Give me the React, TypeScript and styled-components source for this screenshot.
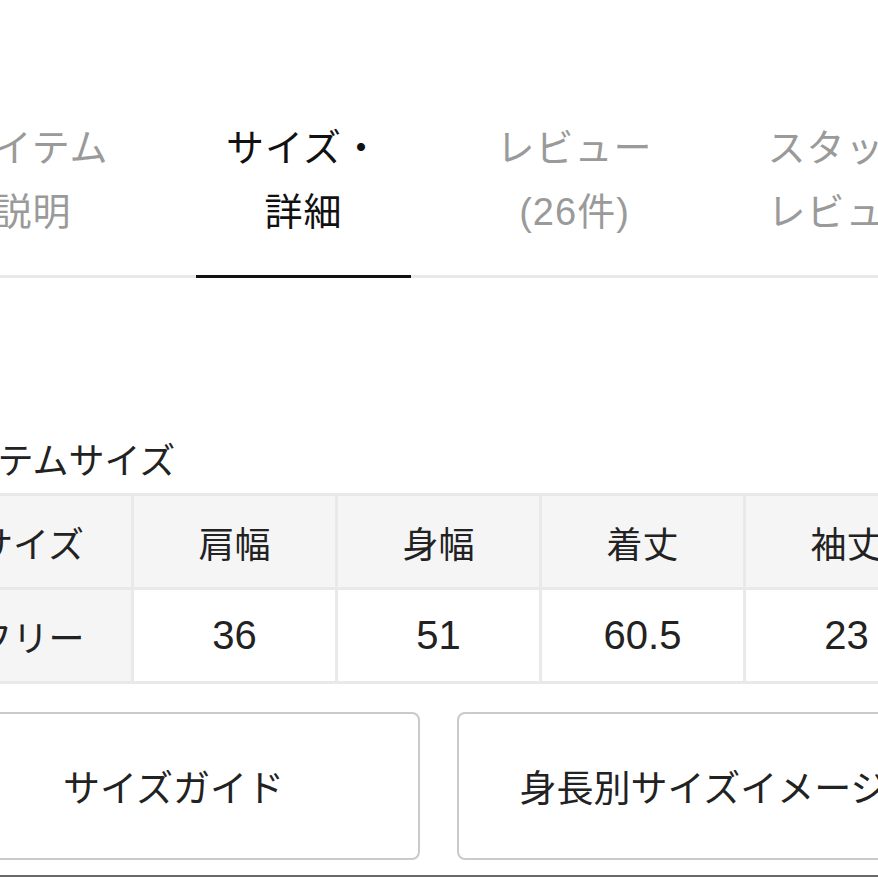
import React from "react";
import styled, { createGlobalStyle } from "styled-components";

// 横スクロールされた商品詳細ページの一部
const GlobalStyle = createGlobalStyle`
  html, body {
    margin: 0;
    padding: 0;
    background: #ffffff;
    overflow: hidden;
  }
  body {
    font-family: "Liberation Sans", "Noto Sans CJK JP", sans-serif;
    color: #222222;
  }
`;

const tabs = [
  { lines: ["アイテム", "説明"], active: false },
  { lines: ["サイズ・", "詳細"], active: true },
  { lines: ["レビュー", "(26件)"], active: false },
  { lines: ["スタッフ", "レビュー"], active: false },
];

const headers = ["サイズ", "肩幅", "身幅", "着丈", "袖丈"];
const rows = [["フリー", "36", "51", "60.5", "23"]];

const App: React.FunctionComponent = () => {
  return (
    <>
      <GlobalStyle />
      <Page>
        <TabBar>
          {tabs.map((tab) => (
            <Tab key={tab.lines.join("")}>
              <TabLabel $active={tab.active}>
                {tab.lines.map((line) => (
                  <TabLine key={line}>{line}</TabLine>
                ))}
              </TabLabel>
            </Tab>
          ))}
        </TabBar>

        <SizeSection>
          <SectionTitle>アイテムサイズ</SectionTitle>
          <SizeTable>
            <thead>
              <tr>
                {headers.map((h) => (
                  <HeadCell key={h}>{h}</HeadCell>
                ))}
              </tr>
            </thead>
            <tbody>
              {rows.map((row) => (
                <tr key={row[0]}>
                  {row.map((v, idx) =>
                    idx === 0 ? (
                      <HeadCell key={v}>{v}</HeadCell>
                    ) : (
                      <BodyCell key={idx}>{v}</BodyCell>
                    )
                  )}
                </tr>
              ))}
            </tbody>
          </SizeTable>
        </SizeSection>

        <ButtonRow>
          <GuideButton>サイズガイド</GuideButton>
          <GuideButton>身長別サイズイメージ</GuideButton>
        </ButtonRow>
      </Page>
      <FooterBar />
    </>
  );
};

const Page = styled.div`
  width: 1023px;
  margin-left: -73px;
`;

const TabBar = styled.div`
  display: flex;
  width: 1400px;
  margin-left: -30px;
  margin-top: 100px;
  border-bottom: 3px solid #e9e9e9;
`;

const Tab = styled.div`
  flex: 0 0 271px;
  box-sizing: border-box;
  padding: 0 28px;
  margin-bottom: -3px;
`;

const TabLabel = styled.div<{ $active: boolean }>`
  padding: 16px 0 31px;
  text-align: center;
  border-bottom: 3px solid ${(p) => (p.$active ? "#111111" : "transparent")};
  color: ${(p) => (p.$active ? "#111111" : "#9a9a9a")};
`;

const TabLine = styled.div`
  font-size: 38px;
  line-height: 64px;
  letter-spacing: 1px;
  white-space: nowrap;
`;

const SizeSection = styled.section`
  margin-top: 160px;
`;

const SectionTitle = styled.h3`
  margin: 0 0 7px;
  padding-left: 1px;
  font-size: 36px;
  font-weight: 400;
  line-height: 48px;
  color: #222222;
`;

const SizeTable = styled.table`
  border-collapse: separate;
  border-spacing: 3px;
  background: #e9e9e9;
  table-layout: fixed;
`;

const HeadCell = styled.th`
  width: 201px;
  height: 91px;
  padding: 0;
  background: #f5f5f5;
  font-size: 36px;
  font-weight: 400;
  text-align: center;
  color: #222222;
  white-space: nowrap;
`;

const BodyCell = styled.td`
  width: 201px;
  height: 91px;
  padding: 0;
  background: #ffffff;
  font-size: 40px;
  text-align: center;
  color: #222222;
`;

const ButtonRow = styled.div`
  display: grid;
  grid-template-columns: 493px 493px;
  gap: 37px;
  margin-top: 28px;
`;

const GuideButton = styled.button`
  height: 148px;
  box-sizing: border-box;
  border: 2px solid #cacaca;
  border-radius: 8px;
  background: #ffffff;
  font-family: "Noto Sans CJK JP", sans-serif;
  font-size: 37px;
  color: #222222;
  white-space: nowrap;
  padding: 0;
`;

const FooterBar = styled.div`
  margin-top: 15px;
  height: 40px;
  border-top: 2px solid #6a6a6a;
`;

export default App;
